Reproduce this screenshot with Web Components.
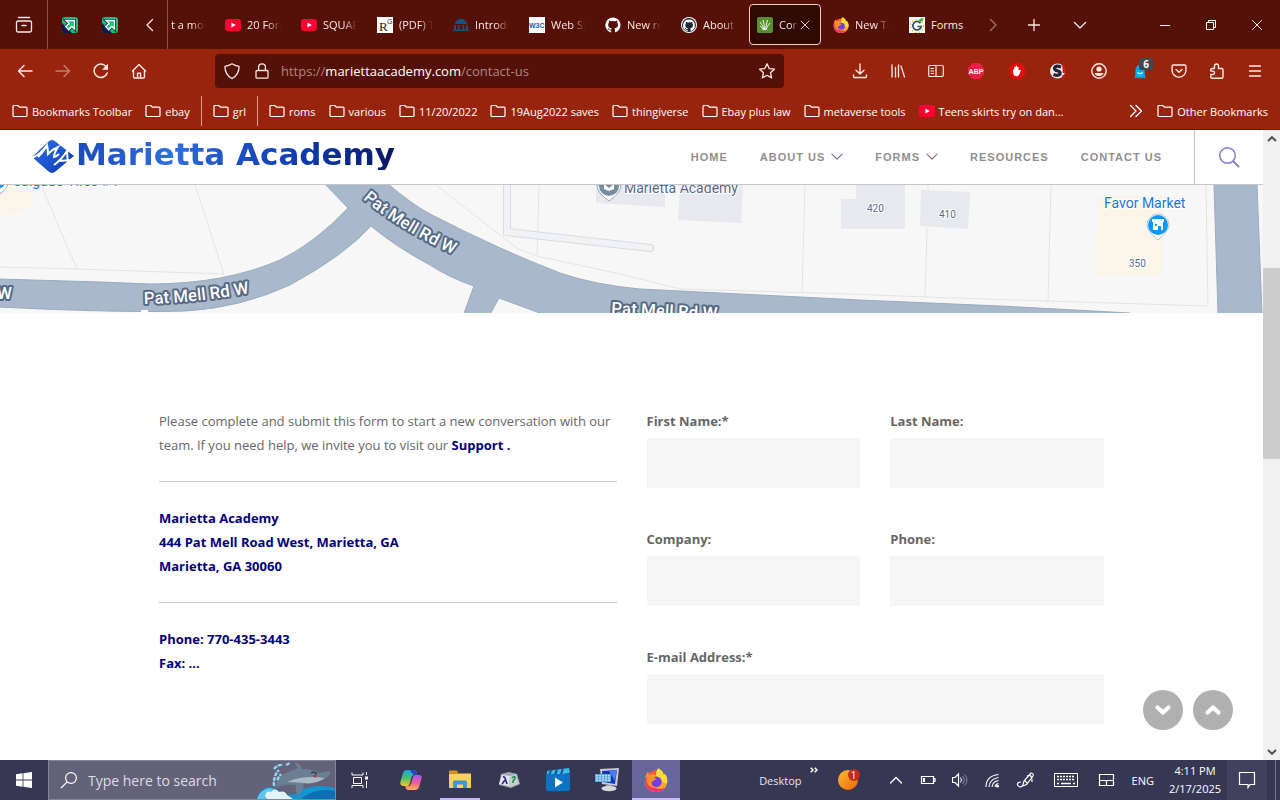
<!DOCTYPE html>
<html lang="en">
<head>
<meta charset="utf-8">
<title>Contact Us - Marietta Academy</title>
<style>
  html, body { margin: 0; height: 100%; }
  body { font-family: "Open Sans", sans-serif; font-size: 11px; overflow: hidden; }
</style>
</head>
<body>
<desktop-screen></desktop-screen>

<script>
/* Icon drawings: name -> [width, height, markup]. Line icons use currentColor. */
const line = (d, w = 1.3) => `<path d="${d}" fill="none" stroke="currentColor" stroke-width="${w}" stroke-linecap="round" stroke-linejoin="round"/>`;
const FLAME = `<circle cx="8" cy="8.800" r="7.200" fill="#ff5a36"/><path d="M9.500 .2C12.500 2 13 3.500 13.200 4.800L14 4C15.600 6 16 9 15 11.500C14 14.500 11 16 8 16C4 16 .7 13 .6 9C.6 6.500 1.300 4.500 2.600 2.500L3.600 5C5 4 7 4.300 8 5C8 3.200 8.500 1.500 9.500 .2Z" fill="#ffa62e"/><path d="M9.500 .2C12.500 2 13 3.500 13.200 4.800L14 4C15.600 6 15.900 8.500 15.200 10.500L12 9L8 5C8 3.200 8.500 1.500 9.500 .2Z" fill="#ffdc3c"/><path d="M.6 8C.6 13 4.200 16 8 16C10.500 16 12.800 15 14 13C12 14.200 9 14 7 13L3.500 9L1.500 5.500C.9 6.300 .6 7 .6 8Z" fill="#f5336f"/><circle cx="8.300" cy="9.200" r="3.500" fill="#6f3fe0"/><path d="M2.600 2.500L3.600 5C5.500 5.500 7.300 6.600 8.600 7.400C7 7.600 6.600 9 5.200 9.200C4.500 11 6 12.500 8 12.800C5 13.600 2.500 12 1.800 9C1.400 6.500 1.800 4 2.600 2.500Z" fill="#ff8f28"/>`;
const OCTO = `M8 .4a7.700 7.700 0 0 0-2.400 15c.4 0 .5-.2.5-.4v-1.500c-2.100.5-2.600-.9-2.600-.9-.3-.9-.8-1.100-.8-1.100-.7-.5.100-.5.100-.5.700.1 1.200.8 1.200.8.7 1.200 1.800.8 2.200.6.1-.5.300-.8.500-1-1.700-.2-3.500-.9-3.500-3.800 0-.9.300-1.500.8-2.100-.1-.2-.3-1 .1-2 0 0 .6-.2 2.100.8a7 7 0 0 1 3.800 0c1.500-1 2.100-.8 2.100-.8.4 1 .1 1.800.1 2 .5.6.8 1.200.8 2.100 0 2.900-1.800 3.600-3.500 3.800.3.200.5.700.5 1.400v2.100c0 .2.100.5.500.4A7.700 7.700 0 0 0 8 .4Z`;
const YT = `<rect x="0" y="2" width="16" height="12" rx="3" fill="#ff0033"/><path d="M6.400 5.400v5.200L10.800 8Z" fill="#fff"/>`;
const ICONS = {
  view: [18, 18, line('M3.500 1.500h11M3 5h12a1.500 1.500 0 0 1 1.500 1.500v8A1.500 1.500 0 0 1 15 16H3a1.500 1.500 0 0 1-1.500-1.500v-8A1.500 1.500 0 0 1 3 5ZM7 9.500h4')],
  pin: [16, 16, `<rect width="16" height="16" rx="3" fill="#1fb877"/><path d="M0 6Q3 8 3 11Q6 12 10 16H3a3 3 0 0 1-3-3Z" fill="#12154d"/><path d="M4 3.500H12.500V12L9.800 9.500L6.600 12.700L3.800 9.600L7 6.400Z" fill="#25c580" stroke="#1d2a63" stroke-width="3"/><path d="M4 3.500H12.500V12L9.800 9.500L6.600 12.700L3.800 9.600L7 6.400Z" fill="#25c580" stroke="#fff" stroke-width="1.300"/>`],
  left: [16, 16, line('M10.500 2.500L5 8l5.500 5.500')],
  right: [16, 16, line('M5.500 2.500L11 8l-5.500 5.500')],
  down: [16, 16, line('M2.500 5.500L8 11l5.500-5.500')],
  plus: [16, 16, line('M8 2.500v11M2.500 8h11')],
  min: [16, 16, '<path d="M3 8.500h10" stroke="#fff"/>'],
  restore: [16, 16, '<path d="M3.500 5.500h7v7h-7ZM5.500 5.500v-2h7v7h-2" fill="none" stroke="#fff"/>'],
  close: [16, 16, line('M3.500 3.500l9 9M12.500 3.500l-9 9', 1)],
  yt: [16, 16, YT],
  rg: [16, 16, '<rect width="16" height="16" fill="#fff"/><text x="2" y="14" font-family="Liberation Serif" font-size="13" fill="#222">R</text><text x="10" y="7" font-family="Liberation Sans" font-size="7" fill="#222">G</text>'],
  dome: [16, 16, '<path d="M2 7a6 5 0 0 1 12 0ZM0 12.500h16v1.500H0ZM1 8h2v4.500H1ZM4.800 8h1.800v4.500H4.800ZM9.400 8h1.800v4.500H9.400ZM13 8h2v4.500h-2ZM7.500 1h1v2h-1Z" fill="#14517f"/>'],
  w3c: [16, 16, '<rect width="16" height="16" fill="#fff"/><text x="0" y="11" font-family="Liberation Sans" font-weight="700" font-size="7" fill="#1561ad">W3C</text>'],
  ghwhite: [16, 16, `<path d="${OCTO}" fill="#fff"/>`],
  ghdark: [16, 16, `<circle cx="8" cy="8" r="8" fill="#fff"/><circle cx="8" cy="8" r="7" fill="#1b2733"/><path d="${OCTO}" fill="#fff" transform="translate(1.800 2.200) scale(.78)"/>`],
  grass: [16, 16, '<rect width="16" height="16" rx="2" fill="#57902f"/><path d="M7 13Q6 8 3 5M7.500 13Q7.500 7 6 3M8.500 13Q9 8 10.500 3M9 13Q10 9 13 6M6.500 13Q5 10 3 9" fill="none" stroke="#eef5e6" stroke-width="1"/>'],
  firefox: [16, 16, FLAME],
  sunny: [16, 16, '<rect width="16" height="16" fill="#fff"/><circle cx="8" cy="9" r="6.500" fill="none" stroke="#eac545" stroke-width="1.600" stroke-dasharray="1.500 2"/><path d="M11.500 6.200a4.200 4.200 0 1 0 .7 3.300H8.500" fill="none" stroke="#35506b" stroke-width="1.700"/><path d="M9.500 5Q10 1 14.500 1Q15 5 9.500 5Z" fill="#52a847"/>'],
  back: [16, 16, line('M15 8H1.500M7 2.500L1.500 8L7 13.500', 1.500)],
  forward: [16, 16, line('M1 8h13.500M9 2.500L14.500 8L9 13.500', 1.500)],
  reload: [16, 16, line('M14.200 10A6.700 6.700 0 1 1 13 3.500', 1.500) + '<path d="M15 .8v6H9Z" fill="currentColor"/>'],
  home: [16, 16, line('M1.500 8L8 1.500L14.500 8M2.500 7.500v6.500a1 1 0 0 0 1 1h9a1 1 0 0 0 1-1V7.500M6.500 14.800v-4.500h3v4.500', 1.400)],
  shield: [16, 16, line('M8 .8Q11 2.800 15 3.300Q15.300 11.500 8 15.500Q.7 11.500 1 3.300Q5 2.800 8 .8Z')],
  lock: [16, 16, line('M3 7.500h10a1 1 0 0 1 1 1v5.700a1 1 0 0 1-1 1H3a1 1 0 0 1-1-1V8.500a1 1 0 0 1 1-1ZM4.600 7.500V4.200a3.400 3.400 0 0 1 6.800 0v3.300')],
  star: [16, 16, line('M8 .8l2.200 4.800l5.200.6l-3.900 3.500l1.100 5.200L8 12.300l-4.600 2.600l1.100-5.200L.6 6.200l5.200-.6Z')],
  download: [16, 16, line('M8 1v10M4 7.200L8 11l4-3.800M1.500 12v1.500a1 1 0 0 0 1 1h11a1 1 0 0 0 1-1V12', 1.400)],
  library: [16, 16, line('M2 2v12M5.500 4.500V14M8.500 2v12M11 3L14.500 14', 1.300)],
  sidebar: [16, 16, line('M2 2.500h12a1.300 1.300 0 0 1 1.300 1.300v8.400a1.300 1.300 0 0 1-1.300 1.300H2a1.300 1.300 0 0 1-1.300-1.300V3.800A1.300 1.300 0 0 1 2 2.500ZM8 2.500v11M3 5.500h2.500M3 8h2.500M3 10.500h2.500', 1.200)],
  abp: [16, 16, '<path d="M4.700 0h6.600L16 4.700v6.600L11.300 16H4.700L0 11.300V4.700Z" fill="#ed1e45"/><text x="8" y="10.500" text-anchor="middle" font-family="Liberation Sans" font-weight="700" font-size="7" fill="#fff">ABP</text>'],
  hand: [16, 16, '<path d="M4.700 0h6.600L16 4.700v6.600L11.300 16H4.700L0 11.300V4.700Z" fill="#e40d0d"/><path d="M4 8.800V6.500h1.300V4h1.400V2.800h1.400V4h1.500v3.500L11.200 6.800q1 .3.500 1.200L10 12q-1 1.500-3 1.300Q4.200 12.500 4 8.800Z" fill="#fff"/>'],
  sbadge: [16, 16, '<circle cx="7.500" cy="8" r="7.500" fill="#eee"/><path d="M11 4.200Q6 1.800 4.500 5Q4.500 7.300 8 8Q11 9 10 11.200Q8 13.400 3.500 11.600" fill="none" stroke="#262537" stroke-width="3.200"/><path d="M12.200 1.500h3L14.800 10h-2ZM12.300 12h3v3h-3Z" fill="#d3131c"/>'],
  account: [16, 16, '<circle cx="8" cy="8" r="7.200" fill="none" stroke="currentColor" stroke-width="1.400"/><circle cx="8" cy="6" r="2.600" fill="currentColor"/><path d="M3.500 10h9Q11.500 13 8 13T3.500 10Z" fill="currentColor"/>'],
  ghost: [16, 16, '<path d="M2.500 15.500Q3.500 12 3.500 7a4.500 5 0 0 1 9 0Q12.500 12 13.700 15.500L11 14.300L9.500 15.800L8 14.400L6.300 15.800L5 14.300Z" fill="#00aef0"/><path d="M5.500 9.500Q8 12 10.500 9.500" fill="none" stroke="#fff" stroke-width="1.300"/>'],
  pocket: [16, 16, line('M2.300 2h11.400a1.200 1.200 0 0 1 1.200 1.200V7.500a6.900 6.600 0 0 1-13.800 0V3.200A1.200 1.200 0 0 1 2.300 2ZM5 6.500L8 9.300l3-2.800', 1.400)],
  puzzle: [16, 16, line('M5.500 5.500V3a2 2 0 0 1 4 0v2.500h3.300a1.200 1.200 0 0 1 1.200 1.200V14a1.200 1.200 0 0 1-1.200 1.200H3a1.200 1.200 0 0 1-1.200-1.200v-2.500h2a1.700 1.700 0 0 0 0-3.400h-2V6.700A1.200 1.200 0 0 1 3 5.500Z', 1.400)],
  menu: [16, 16, line('M2.500 3h11M2.500 8h11M2.500 13h11', 1.300)],
  folder: [16, 16, line('M2 2.500h3.800l1.600 1.600H14a1 1 0 0 1 1 1V12.500a1 1 0 0 1-1 1H2a1 1 0 0 1-1-1V3.500a1 1 0 0 1 1-1Z', 1.200)],
  more: [16, 16, line('M2.500 2.500L8 8L2.500 13.500M8 2.500L13.500 8L8 13.500', 1.300)],
  deskmore: [8, 6, '<path d="M.7 .7L3 3L.7 5.300M4.700 .7L7 3L4.700 5.300" fill="none" stroke="#fff" stroke-width="1.500"/>'],
  navdown: [12, 8, line('M1 1.200L6 6.200L11 1.200', 1.200)],
  search: [22, 22, '<circle cx="9.500" cy="9.500" r="7.800" fill="none" stroke="#7d7fc8" stroke-width="1.500"/><path d="M15 15l6 6" stroke="#7d7fc8" stroke-width="1.800"/>'],
  logo: [44, 34, '<defs><linearGradient id="lg" x1="0" y1="0" x2="1" y2="1"><stop offset="0" stop-color="#2d6fe0"/><stop offset=".6" stop-color="#1a50cf"/><stop offset="1" stop-color="#0d2fa0"/></linearGradient></defs><path d="M21 0Q23 0 25 2L43 16L25 31Q21 35 17 31L1 17L17 2Q19 0 21 0Z" fill="url(#lg)"/><path d="M1 18Q10 14 16 5Q17 10 17 14Q22 9 27 7Q23 13 23 17Q25 17 28 14M7 17Q12 12 15 7" fill="none" stroke="#fff" stroke-width="2"/><path d="M23 25Q30 20 36 11L37 26M27 21L42 20" fill="none" stroke="#fff" stroke-width="2"/>'],
  sup: [10, 6, '<path d="M1 5L5 1.200L9 5" fill="none" stroke="#505050" stroke-width="2"/>'],
  sdown: [10, 6, '<path d="M1 1L5 4.800L9 1" fill="none" stroke="#505050" stroke-width="2"/>'],
  fatdown: [18, 12, '<path d="M3.500 3.500L9 8.500L14.500 3.500" fill="none" stroke="#fff" stroke-width="4.200" stroke-linecap="round"/>'],
  fatup: [18, 12, '<path d="M3.500 8.500L9 3.500L14.500 8.500" fill="none" stroke="#fff" stroke-width="4.200" stroke-linecap="round"/>'],
  windows: [16, 16, '<path d="M0 2.200L6.600 1.300V7.600H0ZM7.400 1.200L16 0V7.600H7.400ZM0 8.400H6.600V14.700L0 13.800ZM7.400 8.400H16V16L7.400 14.800Z" fill="#fff"/>'],
  winsearch: [18, 18, '<circle cx="11" cy="7" r="5.400" fill="none" stroke="#fff" stroke-width="1.200"/><path d="M7.200 10.800L1 17" stroke="#fff" stroke-width="1.200"/>'],
  dolphin: [78, 38, '<path d="M0 38Q2 28 12 26Q20 27 26 33Q36 36 44 29Q60 22 78 27V38Z" fill="#1495cf"/><path d="M0 38Q3 29 12 27Q20 28 24 32L18 34L8 38Z" fill="#5cc8ea"/><path d="M44 38Q58 26 78 30V38Z" fill="#0c6fb4"/><path d="M8 35Q9 29 14 31Q18 26 22 31Q28 29 30 34L36 38H10Z" fill="#e3f4fb"/><path d="M18 27Q20 14 34 10L41 7Q38 3 38 1Q43 2 45 8Q56 8 62 12L72 10Q76 12 69 17Q60 23 47 22Q47 30 41 35Q38 30 39 24Q27 22 18 27Z" fill="#697f93"/><path d="M30 21Q46 14 68 17Q58 24 46 22Q36 21 30 21Z" fill="#aab9c4"/><path d="M54 12q3-2 6 1" stroke="#2a3c4d" stroke-width="1.200" fill="none"/><circle cx="58" cy="15" r="1.500" fill="#c22b3a"/><path d="M17 25Q16 15 22 9M20 19l4-6M17 8Q21 3 26 4M29 4l4-2" stroke="#8ed7f2" stroke-width="2.400" fill="none" stroke-dasharray="4 1"/>'],
  taskview: [18, 16, '<path d="M2.500 5.500h8v6h-8ZM1 .5v2.500h11V.5M1 16v-2.500h11V16M15.500 0v3M15.500 9v7" fill="none" stroke="#fff"/><path d="M14 4.500h3v3h-3Z" fill="#fff"/>'],
  copilot: [22, 22, '<defs><linearGradient id="ca" x1="0" y1="0" x2="0" y2="1"><stop offset="0" stop-color="#1ba4ec"/><stop offset=".5" stop-color="#4bbf68"/><stop offset="1" stop-color="#f2cc2d"/></linearGradient><linearGradient id="cb" x1="0" y1="0" x2="0" y2="1"><stop offset="0" stop-color="#a15af0"/><stop offset=".5" stop-color="#ee5aa0"/><stop offset="1" stop-color="#ffb14a"/></linearGradient></defs><path d="M7 1h7q2 0 2.500 2l.8 3H14q-2 0-2.500 2L9.500 15Q9 17 7 17H4Q-.5 17 .5 12.500L3 4Q4 1 7 1Z" fill="url(#ca)"/><path d="M8.500 21h6.500q3 0 4-3L21.500 9.500Q22.500 6 19 6h-3.500Q13.500 6 13 8L11 14.500Q10.300 17 8 17H5L6 19.500Q6.600 21 8.500 21Z" fill="url(#cb)"/><path d="M9 1h5q2 0 2.500 2l.8 3H14Q12 5 11.300 3Q10.800 1 9 1Z" fill="#2249be"/>'],
  explorer: [22, 20, '<path d="M0 1h7l2 2h-9Z" fill="#d89412"/><path d="M0 3.500h22V18H0Z" fill="#fbd05b"/><path d="M0 1.500q0-1 1-1h7l1.500 3H0Z" fill="#d9940f"/><path d="M4 18v-6q0-1.500 1.500-1.500h11q1.500 0 1.500 1.500v6h-4v-3.500H8V18Z" fill="#3c97d3"/>'],
  lambda: [22, 18, '<path d="M3 3L11 1L19 3L22 13L13 17L1 14Z" fill="#9eabb2"/><path d="M4 4L12 5L11 15L1 13Z" fill="#e5eaed"/><path d="M12 5L18 3L21 13L11 16Z" fill="#c5cfd3"/><path d="M5 6q2-1 3 4l1 3M7 9L4 13" fill="none" stroke="#33258c" stroke-width="1.600"/><path d="M14 7q3-3 3 0q0 1-2 3l0 2" fill="none" stroke="#27883d" stroke-width="1.600"/>'],
  film: [26, 24, '<path d="M2 3L24 0L25 5L2 8Z" fill="#36bdf1"/><path d="M6 2.500L4 7.500M12 2L10 6.500M18 1L16 6" stroke="#12517c" stroke-width="2"/><path d="M1 6h24v15q0 2-2 2H3q-2 0-2-2Z" fill="#0b72c4"/><path d="M10 9.500v10l8-5Z" fill="#fff"/>'],
  monitor: [26, 24, '<path d="M6 1L25 0L23 18L8 16Z" fill="#c7ccd7"/><path d="M8 3L23 2L21 16L9 14Z" fill="#1535bf"/><path d="M15 3L23 2L21 13Z" fill="#4a7df0"/><path d="M1 6h16v8H1Z" fill="#5aa5dc"/><path d="M2 7.800h14M2 10h14M2 12.200h14" stroke="#e4f3fc" stroke-dasharray="2 1"/><path d="M12 17h6v2h-6Z" fill="#999eaa"/><ellipse cx="15" cy="20.500" rx="7.500" ry="2.700" fill="#d4d7dc"/>'],
  orange: [22, 22, '<defs><linearGradient id="og" x1="0" y1="0" x2="1" y2="1"><stop offset="0" stop-color="#f8bd30"/><stop offset="1" stop-color="#f0640c"/></linearGradient></defs><circle cx="10" cy="11" r="10" fill="url(#og)"/>'],
  trayup: [16, 16, line('M2.500 11L8 5.500l5.500 5.500')],
  battery: [16, 16, '<path d="M1.500 4.500h12v7h-12ZM13.500 6.500h1.500v3h-1.500" fill="none" stroke="#fff" stroke-width="1.200"/><path d="M3 6h2v4H3Z" fill="#fff"/>'],
  speaker: [16, 16, '<path d="M.5 5.500H3L6.500 2v12L3 10.500H.5Z" fill="none" stroke="#fff" stroke-width="1.200"/><path d="M8.500 5.500q2 2.500 0 5" fill="none" stroke="#fff"/><path d="M10.500 4q3.500 4 0 8M12.500 2.500q5 5.500 0 11" fill="none" stroke="#8b8b9e"/>'],
  wifi: [16, 16, '<g fill="none" stroke="#fff" stroke-width="1.100"><path d="M2 15Q2 4 14.500 2.500M5 15Q5.500 7 14.500 5.500M8 15Q8.500 9.500 14.500 8.500M11 15Q11.200 12 14.500 11.500"/></g><circle cx="13.500" cy="14" r="1.500" fill="#fff"/>'],
  pen: [20, 16, '<path d="M5 10Q1 10 1.500 13Q3.500 16.500 7 13.500M6.500 14L8 9L15 1Q18 1.500 17 4L10.500 12.500ZM9 9l2 2M11 4q5-3 5 6" fill="none" stroke="#fff" stroke-width="1.200"/>'],
  keyboard: [28, 16, '<path d="M2.500 1.500h23v13h-23Z" fill="none" stroke="#fff"/><path d="M5 4.500h18M5 7.500h18" stroke="#fff" stroke-width="1.400" stroke-dasharray="2 1"/><path d="M5 11.500h2M9 11.500h10M21 11.500h2" stroke="#fff" stroke-width="1.300"/>'],
  touchpad: [20, 16, '<path d="M3.500 2.500h14v11h-14ZM3.500 8.500h14M10.500 8.500v5" fill="none" stroke="#fff" stroke-width="1.200"/>'],
  note: [18, 18, '<path d="M1.500 1.500h15v12H12l-2 3v-3H1.500Z" fill="none" stroke="#fff" stroke-width="1.200"/>'],
};

class UiIcon extends HTMLElement {
  connectedCallback() {
    const [w, h, art] = ICONS[this.getAttribute('name')];
    const k = this.hasAttribute('size') ? this.getAttribute('size') / w : 1;
    this.attachShadow({ mode: 'open' }).innerHTML =
      `<style>:host{display:inline-flex;flex:none}svg{display:block}</style>
       <svg width="${Math.round(w * k)}" height="${Math.round(h * k)}" viewBox="0 0 ${w} ${h}" aria-hidden="true">${art}</svg>`;
  }
}
customElements.define('ui-icon', UiIcon);

/* Registers an element whose shadow root is cloned from a template. */
function component(name, css, html, ready) {
  const tpl = document.createElement('template');
  tpl.innerHTML = `<style>*{box-sizing:border-box}button{font:inherit;color:inherit;background:none;border:0;padding:0;display:flex;align-items:center;justify-content:center}a{color:inherit;text-decoration:none}${css}</style>${html}`;
  customElements.define(name, class extends HTMLElement {
    connectedCallback() {
      if (this.shadowRoot) return;
      this.attachShadow({ mode: 'open' }).append(tpl.content.cloneNode(true));
      if (ready) ready(this, this.shadowRoot);
    }
  });
}

component('browser-tab', `
  :host{display:block;flex:none;width:76px;height:41px;padding:0 2px}
  button{width:100%;height:100%;padding:0 7px;gap:6px;border:1px solid transparent;border-radius:4px;justify-content:flex-start}
  span{flex:1;min-width:0;text-align:left;white-space:nowrap;overflow:hidden;mask-image:linear-gradient(to right,#000 60%,transparent)}
  ui-icon[name=close]{display:none;margin:0 1px 0 -6px}
  :host([whole]) span{mask-image:none;overflow:visible}
  :host([active]) button{background:#300903;border-color:#f6cdbf}
  :host([active]) ui-icon[name=close]{display:block}`,
  `<button role="tab"><span><slot></slot></span><ui-icon name="close" size="14"></ui-icon></button>`,
  (el, root) => {
    const i = document.createElement('ui-icon');
    i.setAttribute('name', el.getAttribute('icon'));
    root.querySelector('button').prepend(i);
  });

component('tab-strip', `
  :host{display:flex;height:49px;background:#551107;color:#fbe9e4;align-items:center}
  .cell{width:46px;height:49px}
  .view{width:48px;border-right:1px solid #85544c}
  .pins{display:flex;gap:24px;padding:0 14px}
  .scroll{width:35px}
  .tabs{flex:1;min-width:0;height:49px;display:flex;align-items:center;justify-content:flex-end;overflow:hidden;border-left:1px solid #85544c}
  .dim{width:36px;opacity:.45}
  .win{display:flex;margin-left:auto;padding-left:39px}`,
  `<button class="cell view" aria-label="Firefox View"><ui-icon name="view"></ui-icon></button>
   <div class="pins"><button aria-label="Pinned tab"><ui-icon name="pin"></ui-icon></button><button aria-label="Pinned tab"><ui-icon name="pin"></ui-icon></button></div>
   <button class="cell scroll" aria-label="Scroll left"><ui-icon name="left"></ui-icon></button>
   <div class="tabs" role="tablist">
     <browser-tab icon="yt">t a month</browser-tab>
     <browser-tab icon="yt">20 Forms</browser-tab>
     <browser-tab icon="yt">SQUARE</browser-tab>
     <browser-tab icon="rg">(PDF) T</browser-tab>
     <browser-tab icon="dome">Introdu</browser-tab>
     <browser-tab icon="w3c">Web St</browser-tab>
     <browser-tab icon="ghwhite">New re</browser-tab>
     <browser-tab icon="ghdark">About</browser-tab>
     <browser-tab icon="grass" active>Con</browser-tab>
     <browser-tab icon="firefox">New Ta</browser-tab>
     <browser-tab icon="sunny" whole>Forms</browser-tab>
   </div>
   <button class="cell dim" aria-label="Scroll right"><ui-icon name="right"></ui-icon></button>
   <button class="cell" aria-label="New tab"><ui-icon name="plus"></ui-icon></button>
   <button class="cell" aria-label="List tabs"><ui-icon name="down"></ui-icon></button>
   <div class="win">
     <button class="cell" aria-label="Minimize"><ui-icon name="min"></ui-icon></button>
     <button class="cell" aria-label="Restore"><ui-icon name="restore"></ui-icon></button>
     <button class="cell" aria-label="Close"><ui-icon name="close"></ui-icon></button>
   </div>`);

component('nav-toolbar', `
  :host{display:flex;height:44px;padding:0 6px;align-items:center;background:#98240d;color:#fbe9e4}
  button{width:38px;height:38px;flex:none}
  .ext{width:41px;position:relative}
  .off{opacity:.45}
  .url{flex:1;min-width:0;height:34px;margin:0 57px;padding:0 9px;display:flex;align-items:center;background:#551107;border-radius:4px}
  .url [role=textbox]{flex:1;margin-left:11px;font-size:13px;color:#aa8882;white-space:nowrap;outline:0}
  .url ui-icon + ui-icon{margin-left:14px}
  b{font-weight:400;color:#fff}
  .badge{position:absolute;left:20px;top:6px;width:14px;height:12px;border-radius:2px;background:#414950;color:#fff;font:700 10px/12px "Open Sans",sans-serif}`,
  `<button aria-label="Back"><ui-icon name="back"></ui-icon></button>
   <button class="off" aria-label="Forward"><ui-icon name="forward"></ui-icon></button>
   <button aria-label="Reload"><ui-icon name="reload"></ui-icon></button>
   <button aria-label="Home"><ui-icon name="home"></ui-icon></button>
   <div class="url"><ui-icon name="shield"></ui-icon><ui-icon name="lock"></ui-icon>
     <div role="textbox" aria-label="Address" contenteditable="true" spellcheck="false">https://<b>mariettaacademy.com</b>/contact-us</div>
     <ui-icon name="star"></ui-icon></div>
   <button aria-label="Downloads"><ui-icon name="download"></ui-icon></button>
   <button aria-label="Library"><ui-icon name="library"></ui-icon></button>
   <button aria-label="Sidebars"><ui-icon name="sidebar"></ui-icon></button>
   <button class="ext" aria-label="Adblock Plus"><ui-icon name="abp"></ui-icon></button>
   <button class="ext" aria-label="AdBlock"><ui-icon name="hand"></ui-icon></button>
   <button class="ext" aria-label="Extension"><ui-icon name="sbadge"></ui-icon></button>
   <button class="ext" aria-label="Account"><ui-icon name="account"></ui-icon></button>
   <button class="ext" aria-label="Ghostery"><ui-icon name="ghost"></ui-icon><span class="badge">6</span></button>
   <button aria-label="Pocket"><ui-icon name="pocket"></ui-icon></button>
   <button aria-label="Extensions"><ui-icon name="puzzle"></ui-icon></button>
   <button aria-label="Menu"><ui-icon name="menu"></ui-icon></button>`);

component('bookmark-item', `
  :host{display:block;flex:none}
  a{display:flex;align-items:center;gap:4px;white-space:nowrap}`,
  `<a href="#"><slot></slot></a>`,
  (el, root) => {
    const i = document.createElement('ui-icon');
    i.setAttribute('name', el.getAttribute('icon') || 'folder');
    root.querySelector('a').prepend(i);
  });

component('bookmark-bar', `
  :host{display:flex;height:37px;padding:0 12px;gap:13px;align-items:center;background:#98240d;border-bottom:1px solid #6d1a0a;color:#fff}
  i{width:1px;height:30px;background:#d9a294;margin:0 -2px}
  .more{margin-left:auto}`,
  `<bookmark-item>Bookmarks Toolbar</bookmark-item><bookmark-item>ebay</bookmark-item><i></i>
   <bookmark-item>grl</bookmark-item><i></i><bookmark-item>roms</bookmark-item><bookmark-item>various</bookmark-item>
   <bookmark-item>11/20/2022</bookmark-item><bookmark-item>19Aug2022 saves</bookmark-item><bookmark-item>thingiverse</bookmark-item>
   <bookmark-item>Ebay plus law</bookmark-item><bookmark-item>metaverse tools</bookmark-item>
   <bookmark-item icon="yt">Teens skirts try on dan...</bookmark-item>
   <button class="more" aria-label="More bookmarks"><ui-icon name="more"></ui-icon></button><bookmark-item>Other Bookmarks</bookmark-item>`);

component('site-header', `
  :host{display:flex;height:55px;background:#fff;border-bottom:1px solid #c6c6c6;align-items:stretch}
  .brand{display:flex;align-items:center;gap:1px;padding-left:31px;font:700 31px/32px "DejaVu Sans",sans-serif;white-space:nowrap}
  .brand span{margin-bottom:6px;color:transparent;background:linear-gradient(to right,#1c4ac0,#2f6fe0 30%,#1d50c4 50%,#0c36a8 75%,#0a1860);background-clip:text}
  nav{margin-left:auto;display:flex;align-items:center;gap:32px;padding-right:32px;font:700 11px/16px "Liberation Sans",sans-serif;letter-spacing:1px;color:#8f8f8f}
  nav a{display:flex;align-items:center;gap:6px;white-space:nowrap}
  nav ui-icon{color:#6c6f9a}
  nav .warm{color:#90686b}
  button{width:69px;border-left:1px solid #c6c6c6}`,
  `<a class="brand" href="#"><ui-icon name="logo"></ui-icon><span>Marietta Academy</span></a>
   <nav><a href="#">HOME</a><a href="#">ABOUT US <ui-icon name="navdown"></ui-icon></a><a href="#">FORMS <ui-icon class="warm" name="navdown"></ui-icon></a><a href="#">RESOURCES</a><a href="#">CONTACT US</a></nav>
   <button aria-label="Search"><ui-icon name="search"></ui-icon></button>`);

component('street-map', `
  :host{display:block;height:128px;background:#f7f7f7;overflow:hidden}
  svg{display:block;width:100%;height:128px;font-family:Roboto,sans-serif}
  .lot{fill:none;stroke:#e3e4e7}
  .road{fill:#a9b8ca;stroke:#9aabc0}
  .street{font-size:17px;font-weight:500;fill:#fff;stroke:#566a86;stroke-width:4px;paint-order:stroke;stroke-linejoin:round}
  .poi{font-size:14px;stroke:#fff;stroke-width:2px;paint-order:stroke}
  .num{font-size:10px;fill:#56698a;stroke:#fff;stroke-width:2px;paint-order:stroke}`,
  `<svg viewBox="0 185 1263 128" preserveAspectRatio="xMidYMin slice" role="img" aria-label="Map">
    <defs><path id="s1" d="M144 304Q200 303 260 291"/><path id="s2" d="M363 199Q406 236 476 264"/><path id="s3" d="M611 314L750 321"/></defs>
    <path d="M0 185H28L34 206L0 217ZM1098 196H1163L1162 276L1096 275Z" fill="#faf5e9"/>
    <path d="M596 185H665V207L596 203ZM680 185H743L741 223L678 220ZM841 199H856V185H905V229H841Z" fill="#e8e9ef"/>
    <path d="M921 190L970 192L968 229L920 226Z" fill="#e6eaed"/>
    <path class="lot" d="M41 185L77 269M195 185L224 274M0 267L77 269L224 274M436 185L518 249L537 256L625 275L680 289L850 294L925 297L1047 301L1208 306L1206 185M539 185L537 256M805 185L802 292M928 185V190M927 228L925 297M1051 185L1048 301"/>
    <path d="M507 180V232L650 248" fill="none" stroke="#d9dce0" stroke-width="8" stroke-linecap="round"/>
    <path d="M507 180V232L650 248" fill="none" stroke="#f1f2f4" stroke-width="6" stroke-linecap="round"/>
    <path class="road" d="M-2 279L100 282L150 284Q225 284 280 260Q315 243 348 208L324 183H387Q410 203 430 214Q500 250 560 273Q595 285 640 289L860 300L1000 306L1130 313V316H548L499 298L489 316H463L474 286Q450 278 430 265Q396 247 371 226Q345 255 290 285Q240 308 185 311Q120 313 -2 307Z"/>
    <path class="road" d="M1214 184H1257L1262 314H1218Z"/>
    <path d="M141 310h7v4h-7Z" fill="#fff"/>
    <text class="street"><textPath href="#s1">Pat Mell Rd W</textPath></text>
    <text class="street"><textPath href="#s2">Pat Mell Rd W</textPath></text>
    <text class="street"><textPath href="#s3">Pat Mell Rd W</textPath></text>
    <text class="street" x="-3" y="299">W</text>
    <path d="M597 185H621Q621 193 609 201Q597 193 597 185Z" fill="#fff" stroke="#9aabc0"/><circle cx="609" cy="186" r="10" fill="#75909c"/><path d="M604 184V189L609 191L614 189V184L609 188Z" fill="#fff"/>
    <path d="M-2 183H9Q6 190 0 194Z" fill="#fff" stroke="#9aabc0"/><path d="M-2 183H6Q3 188 -2 189Z" fill="#0c98fb"/>
    <text class="poi" x="13" y="186" fill="#1a73e8">Salgado Tires #4</text>
    <text class="poi" x="624" y="193" fill="#56698a">Marietta Academy</text>
    <text class="poi" x="1104" y="208" fill="#1a73e8">Favor Market</text>
    <text class="num" x="867" y="212">420</text><text class="num" x="939" y="218">410</text><text class="num" x="1129" y="267">350</text>
    <path d="M1158 214A11 11 0 0 1 1169 225Q1169 231 1158 240Q1147 231 1147 225A11 11 0 0 1 1158 214Z" fill="#fff" stroke="#bac2ca"/><circle cx="1158" cy="225" r="10" fill="#0c98fb"/><path d="M1152 219h12v3h-12ZM1153 222h10v8h-2v-4h-3v4h-5Z" fill="#fff"/><path d="M1155 224h2v2h-2Z" fill="#0c98fb"/>
  </svg>`);

component('form-field', `
  :host{display:block}
  label{display:block;margin-bottom:5px;font-weight:700;color:#666}
  input{display:block;width:100%;height:50px;border:0;background:#f5f5f5;padding:0 15px;font:inherit}`,
  `<label for="f"><slot></slot></label><input id="f">`,
  (el, root) => { root.querySelector('input').type = el.getAttribute('type') || 'text'; });

component('contact-info', `
  :host{display:block;color:#666}
  p{margin:0}
  address{font-style:normal}
  hr{border:0;border-top:1px solid #ccc;margin:24px 0}
  a,address,.tel{font-weight:700;color:#000080}`,
  `<p>Please complete and submit this form to start a new conversation with our team. If you need help, we invite you to visit our <a href="#">Support .</a></p><hr>
   <address>Marietta Academy<br>444 Pat Mell Road West, Marietta, GA<br>Marietta, GA 30060</address><hr>
   <p class="tel">Phone: 770-435-3443<br>Fax: ...</p>`);

component('contact-section', `
  :host{display:grid;grid-template-columns:1fr 1fr;gap:30px;max-width:945px;margin:0 auto;padding-top:96px;font-size:13px;line-height:24px}
  form{display:grid;grid-template-columns:1fr 1fr;gap:39px 30px;align-content:start}
  .wide{grid-column:1/-1}`,
  `<contact-info></contact-info>
   <form><form-field>First Name:*</form-field><form-field>Last Name:</form-field><form-field>Company:</form-field><form-field type="tel">Phone:</form-field><form-field class="wide" type="email">E-mail Address:*</form-field></form>`);

component('scroll-bar', `
  :host{display:flex;flex-direction:column;width:17px;flex:none;background:#f0f0f0}
  button{height:17px;flex:none}
  .a{flex:121}.thumb{flex:191;background:#cdcdcd}.b{flex:284}`,
  `<button aria-label="Up"><ui-icon name="sup"></ui-icon></button><div class="a"></div><div class="thumb"></div><div class="b"></div><button aria-label="Down"><ui-icon name="sdown"></ui-icon></button>`);

component('page-view', `
  :host{display:flex;flex:1;min-height:0;background:#fff}
  main{flex:1;min-width:0;overflow:hidden;position:relative}
  .jump{position:absolute;right:30px;bottom:30px;display:flex;gap:10px}
  .jump button{width:40px;height:40px;border-radius:50%;background:#b0b0b0}`,
  `<main><site-header></site-header><street-map></street-map><contact-section></contact-section>
     <div class="jump"><button aria-label="Scroll down"><ui-icon name="fatdown"></ui-icon></button><button aria-label="Scroll up"><ui-icon name="fatup"></ui-icon></button></div></main>
   <scroll-bar></scroll-bar>`);

component('task-bar', `
  :host{display:flex;height:40px;flex:none;background:#373753;color:#fff;align-items:stretch}
  .start,.app{width:48px}
  .search{width:288px;display:flex;align-items:center;background:#646279;border:1px solid #85849a;padding-left:11px}
  .search input{flex:1;min-width:0;border:0;background:none;margin-left:10px;padding:0;font:14px "Open Sans",sans-serif;color:#fff;outline:0}
  .search input::placeholder{color:#dddce4;opacity:1}
  .apps{display:flex;gap:1px;margin-left:3px}
  .open{box-shadow:inset 0 -2px #c6b9f5}
  .open.narrow{box-shadow:none;position:relative}
  .open.narrow::after{content:"";position:absolute;left:4px;right:4px;bottom:0;height:2px;background:#c6b9f5}
  .on{background:#67669a}
  .right{margin-left:auto;display:flex;align-items:center}
  .desk{gap:8px;color:#e6e5ec}
  .desk ui-icon{margin-bottom:20px}
  .news{position:relative;margin:0 28px 0 20px}
  .news span{position:absolute;left:10px;top:0;width:12px;height:12px;border-radius:50%;background:#c42b1c;font:10px/12px "Open Sans",sans-serif}
  .tray{display:flex;align-items:center;gap:16px;margin-right:9px}
  .clock{width:64px;flex-direction:column;line-height:18px}
  .note{width:40px;height:40px;background:#41405d}
  .peek{width:5px;height:40px;margin-left:8px;border-left:1px solid #77778c}`,
  `<button class="start" aria-label="Start"><ui-icon name="windows"></ui-icon></button>
   <div class="search"><ui-icon name="winsearch"></ui-icon><input aria-label="Search" placeholder="Type here to search"><ui-icon name="dolphin"></ui-icon></div>
   <button class="app" aria-label="Task view"><ui-icon name="taskview"></ui-icon></button>
   <div class="apps">
     <button class="app" aria-label="Copilot"><ui-icon name="copilot"></ui-icon></button>
     <button class="app open narrow" aria-label="File Explorer"><ui-icon name="explorer"></ui-icon></button>
     <button class="app" aria-label="Lambda"><ui-icon name="lambda"></ui-icon></button>
     <button class="app" aria-label="Movies"><ui-icon name="film"></ui-icon></button>
     <button class="app" aria-label="On-screen keyboard"><ui-icon name="monitor"></ui-icon></button>
     <button class="app open on" aria-label="Firefox"><ui-icon name="firefox" size="24"></ui-icon></button>
   </div>
   <div class="right">
     <button class="desk">Desktop<ui-icon name="deskmore"></ui-icon></button>
     <button class="news" aria-label="News"><ui-icon name="orange"></ui-icon><span>1</span></button>
     <div class="tray"><ui-icon name="trayup"></ui-icon><ui-icon name="battery"></ui-icon><ui-icon name="speaker"></ui-icon><ui-icon name="wifi"></ui-icon><ui-icon name="pen"></ui-icon><ui-icon name="keyboard"></ui-icon><ui-icon name="touchpad"></ui-icon><button>ENG</button></div>
     <button class="clock"><span>4:11 PM</span><span>2/17/2025</span></button>
     <button class="note" aria-label="Notifications"><ui-icon name="note"></ui-icon></button>
     <button class="peek" aria-label="Show desktop"></button>
   </div>`);

component('desktop-screen', `:host{display:flex;flex-direction:column;height:100vh}`,
  `<tab-strip></tab-strip><nav-toolbar></nav-toolbar><bookmark-bar></bookmark-bar><page-view></page-view><task-bar></task-bar>`);
</script>
</body>
</html>
